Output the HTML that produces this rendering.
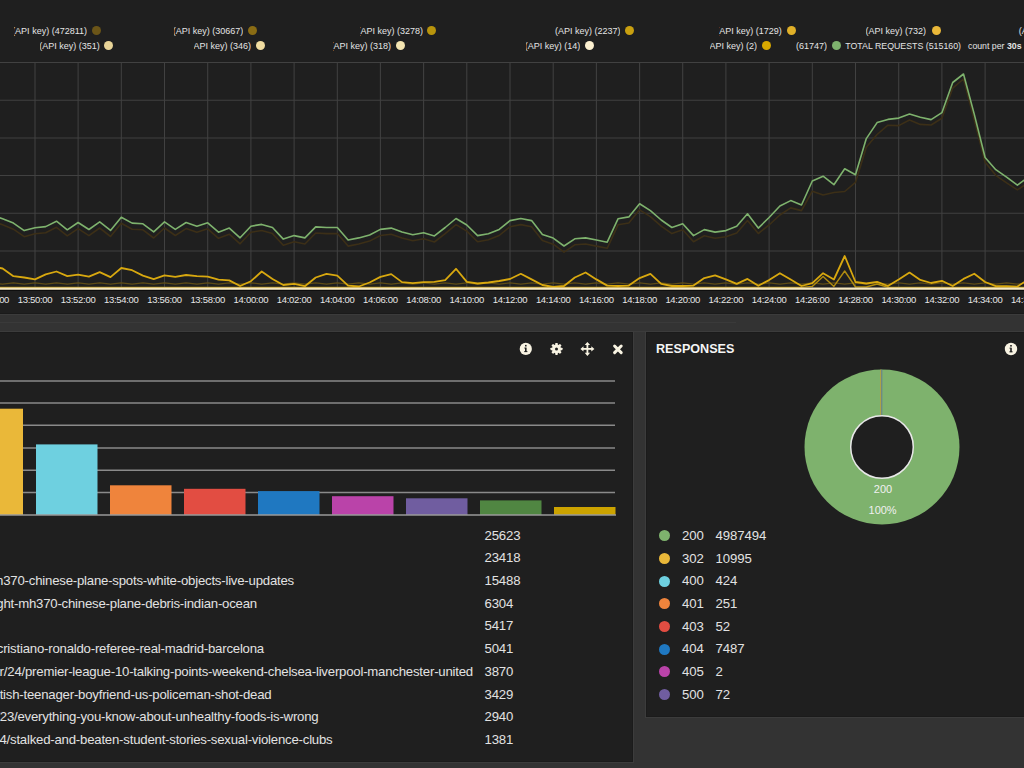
<!DOCTYPE html>
<html><head><meta charset="utf-8"><title>Dashboard</title>
<style>
html,body{margin:0;padding:0;width:1024px;height:768px;overflow:hidden;background:#333333;font-family:"Liberation Sans",sans-serif;}
.p{position:absolute;background:#1f1f1f}
.chart{position:absolute;left:0;top:0}
.lg{position:absolute;height:12px;overflow:hidden;font-size:9px;line-height:12px;color:#e4e4e4}
.lg span{position:absolute;right:0;top:0;white-space:nowrap}
.lt{position:absolute;font-size:9px;line-height:12px;color:#e4e4e4;white-space:nowrap}
.dot{position:absolute;width:9px;height:9px;border-radius:50%}
.rdot{position:absolute;width:11px;height:11px;border-radius:50%}
.tr{position:absolute;font-size:13.2px;letter-spacing:-0.21px;line-height:16px;color:#e2e2e2;white-space:nowrap}
.tn{position:absolute;font-size:13.2px;letter-spacing:-0.15px;line-height:16px;color:#e2e2e2;white-space:nowrap}
.h{position:absolute;font-size:12.6px;font-weight:bold;color:#f4f4f4;white-space:nowrap;line-height:16px}
.pb{position:absolute;box-sizing:border-box;border:1px solid #3c3c3c;box-shadow:inset 0 0 0 1px #1b1b1b;background:#1f1f1f}
.hl{position:absolute;left:0;width:1024px;height:1px}
</style></head><body>
<div class="p" style="left:0;top:0;width:1024px;height:313px"></div>
<div class="hl" style="top:313px;background:#1a1a1a"></div>
<div class="hl" style="top:314px;background:#3b3b3b"></div>
<div class="hl" style="top:322px;width:736px;background:#3a3a3a"></div>
<div class="hl" style="top:331px;background:#3b3b3b"></div>
<svg class="chart" width="1024" height="313" viewBox="0 0 1024 313">
<g stroke="#414141" stroke-width="1.05"><line x1="-8.2" y1="62" x2="-8.2" y2="288" /><line x1="35.0" y1="62" x2="35.0" y2="288" /><line x1="78.1" y1="62" x2="78.1" y2="288" /><line x1="121.3" y1="62" x2="121.3" y2="288" /><line x1="164.5" y1="62" x2="164.5" y2="288" /><line x1="207.7" y1="62" x2="207.7" y2="288" /><line x1="250.9" y1="62" x2="250.9" y2="288" /><line x1="294.1" y1="62" x2="294.1" y2="288" /><line x1="337.3" y1="62" x2="337.3" y2="288" /><line x1="380.4" y1="62" x2="380.4" y2="288" /><line x1="423.6" y1="62" x2="423.6" y2="288" /><line x1="466.8" y1="62" x2="466.8" y2="288" /><line x1="510.0" y1="62" x2="510.0" y2="288" /><line x1="553.2" y1="62" x2="553.2" y2="288" /><line x1="596.4" y1="62" x2="596.4" y2="288" /><line x1="639.6" y1="62" x2="639.6" y2="288" /><line x1="682.7" y1="62" x2="682.7" y2="288" /><line x1="725.9" y1="62" x2="725.9" y2="288" /><line x1="769.1" y1="62" x2="769.1" y2="288" /><line x1="812.3" y1="62" x2="812.3" y2="288" /><line x1="855.5" y1="62" x2="855.5" y2="288" /><line x1="898.7" y1="62" x2="898.7" y2="288" /><line x1="941.9" y1="62" x2="941.9" y2="288" /><line x1="985.1" y1="62" x2="985.1" y2="288" /><line x1="1028.2" y1="62" x2="1028.2" y2="288" /><line x1="0" y1="62.5" x2="1024" y2="62.5" /><line x1="0" y1="100.2" x2="1024" y2="100.2" /><line x1="0" y1="137.9" x2="1024" y2="137.9" /><line x1="0" y1="175.5" x2="1024" y2="175.5" /><line x1="0" y1="213.2" x2="1024" y2="213.2" /><line x1="0" y1="250.9" x2="1024" y2="250.9" /></g>
<path d="M-8.2,282.8 L2.6,284.2 L13.4,282.8 L24.2,284.2 L35.0,282.8 L45.7,284.2 L56.5,282.8 L67.3,284.2 L78.1,282.8 L88.9,284.2 L99.7,282.8 L110.5,284.2 L121.3,282.8 L132.1,284.2 L142.9,282.8 L153.7,284.2 L164.5,282.8 L175.3,284.2 L186.1,282.8 L196.9,284.2 L207.7,282.8 L218.5,284.2 L229.3,282.8 L240.1,284.2 L250.9,282.8 L261.7,284.2 L272.5,282.8 L283.3,284.2 L294.1,282.8 L304.9,284.2 L315.7,282.8 L326.5,284.2 L337.3,282.8 L348.1,284.2 L358.8,282.8 L369.6,284.2 L380.4,282.8 L391.2,284.2 L402.0,282.8 L412.8,284.2 L423.6,282.8 L434.4,284.2 L445.2,282.8 L456.0,284.2 L466.8,282.8 L477.6,284.2 L488.4,282.8 L499.2,284.2 L510.0,282.8 L520.8,284.2 L531.6,282.8 L542.4,284.2 L553.2,282.8 L564.0,284.2 L574.8,282.8 L585.6,284.2 L596.4,282.8 L607.2,284.2 L618.0,282.8 L628.8,284.2 L639.6,282.8 L650.4,284.2 L661.2,282.8 L671.9,284.2 L682.7,282.8 L693.5,284.2 L704.3,282.8 L715.1,284.2 L725.9,282.8 L736.7,284.2 L747.5,282.8 L758.3,284.2 L769.1,282.8 L779.9,284.2 L790.7,282.8 L801.5,284.2 L812.3,282.8 L823.1,284.2 L833.9,282.8 L844.7,284.2 L855.5,282.8 L866.3,284.2 L877.1,282.8 L887.9,284.2 L898.7,282.8 L909.5,284.2 L920.3,282.8 L931.1,284.2 L941.9,282.8 L952.7,284.2 L963.5,282.8 L974.3,284.2 L985.1,282.8 L995.8,284.2 L1006.6,282.8 L1017.4,284.2 L1028.2,282.8" fill="none" stroke="#5e4c16" stroke-width="1.3" stroke-linejoin="round"/>
<path d="M-8.2,287.4 L2.6,287.4 L13.4,287.4 L24.2,287.4 L35.0,287.4 L45.7,287.4 L56.5,287.4 L67.3,287.4 L78.1,287.4 L88.9,287.4 L99.7,287.4 L110.5,287.4 L121.3,287.4 L132.1,287.4 L142.9,287.4 L153.7,287.4 L164.5,287.4 L175.3,287.4 L186.1,287.4 L196.9,287.4 L207.7,287.4 L218.5,287.4 L229.3,287.4 L240.1,287.4 L250.9,287.4 L261.7,287.4 L272.5,287.4 L283.3,287.4 L294.1,287.4 L304.9,287.4 L315.7,287.4 L326.5,287.4 L337.3,287.4 L348.1,287.4 L358.8,287.4 L369.6,287.4 L380.4,287.4 L391.2,287.4 L402.0,287.4 L412.8,287.4 L423.6,287.4 L434.4,287.4 L445.2,287.4 L456.0,287.4 L466.8,287.4 L477.6,287.4 L488.4,287.4 L499.2,287.4 L510.0,287.4 L520.8,287.4 L531.6,287.4 L542.4,287.4 L553.2,287.4 L564.0,287.4 L574.8,287.4 L585.6,287.4 L596.4,287.4 L607.2,287.4 L618.0,287.4 L628.8,287.4 L639.6,287.4 L650.4,287.4 L661.2,287.4 L671.9,287.4 L682.7,287.4 L693.5,287.4 L704.3,287.4 L715.1,287.4 L725.9,287.4 L736.7,287.4 L747.5,287.4 L758.3,287.4 L769.1,287.4 L779.9,287.4 L790.7,287.4 L801.5,287.4 L812.3,286.4 L823.1,276.4 L833.9,286.4 L844.7,271.0 L855.5,287.0 L866.3,287.0 L877.1,284.0 L887.9,287.4 L898.7,287.4 L909.5,287.4 L920.3,287.4 L931.1,287.4 L941.9,287.4 L952.7,287.4 L963.5,287.4 L974.3,287.4 L985.1,287.4 L995.8,287.4 L1006.6,287.4 L1017.4,287.4 L1028.2,287.4" fill="none" stroke="#b08c10" stroke-width="1.4" stroke-linejoin="round"/>
<path d="M-8.2,220.6 L2.6,224.8 L13.4,229.2 L24.2,236.7 L35.0,233.8 L45.7,232.7 L56.5,227.3 L67.3,235.8 L78.1,228.6 L88.9,235.6 L99.7,228.0 L110.5,236.5 L121.3,223.3 L132.1,229.2 L142.9,229.8 L153.7,238.0 L164.5,228.0 L175.3,235.5 L186.1,228.6 L196.9,232.3 L207.7,228.8 L218.5,238.3 L229.3,234.2 L240.1,243.8 L250.9,232.3 L261.7,230.5 L272.5,233.6 L283.3,245.2 L294.1,241.7 L304.9,244.0 L315.7,233.0 L326.5,233.6 L337.3,233.6 L348.1,246.1 L358.8,244.0 L369.6,241.1 L380.4,235.5 L391.2,234.2 L402.0,238.0 L412.8,240.8 L423.6,238.8 L434.4,242.0 L445.2,233.6 L456.0,224.6 L466.8,231.1 L477.6,241.7 L488.4,239.8 L499.2,235.5 L510.0,226.7 L520.8,224.6 L531.6,226.7 L542.4,240.5 L553.2,244.2 L564.0,252.1 L574.8,244.8 L585.6,244.0 L596.4,246.1 L607.2,248.3 L618.0,224.8 L628.8,223.0 L639.6,209.8 L650.4,216.7 L661.2,226.1 L671.9,233.6 L682.7,229.8 L693.5,241.7 L704.3,235.7 L715.1,238.2 L725.9,236.7 L736.7,233.1 L747.5,220.6 L758.3,233.5 L769.1,225.0 L779.9,215.0 L790.7,207.9 L801.5,210.6 L812.3,191.2 L823.1,195.0 L833.9,192.5 L844.7,191.5 L855.5,182.3 L866.3,147.2 L877.1,134.5 L887.9,125.2 L898.7,125.6 L909.5,120.0 L920.3,124.4 L931.1,125.0 L941.9,118.3 L952.7,88.1 L963.5,79.0 L974.3,120.0 L985.1,162.2 L995.8,175.3 L1006.6,182.8 L1017.4,189.8 L1028.2,182.8" fill="none" stroke="#3c2f17" stroke-width="1.6" stroke-linejoin="round"/>
<path d="M-8.2,266.5 L2.6,268.5 L13.4,276.2 L24.2,277.5 L35.0,279.4 L45.7,274.4 L56.5,271.5 L67.3,276.2 L78.1,274.6 L88.9,276.6 L99.7,272.1 L110.5,277.1 L121.3,268.0 L132.1,270.2 L142.9,275.6 L153.7,279.1 L164.5,275.4 L175.3,276.9 L186.1,275.0 L196.9,276.2 L207.7,276.6 L218.5,279.6 L229.3,280.4 L240.1,286.0 L250.9,281.2 L261.7,271.5 L272.5,279.0 L283.3,285.0 L294.1,283.8 L304.9,286.2 L315.7,277.5 L326.5,273.8 L337.3,275.6 L348.1,285.6 L358.8,286.5 L369.6,282.5 L380.4,276.9 L391.2,274.1 L402.0,282.1 L412.8,283.1 L423.6,282.1 L434.4,281.9 L445.2,280.2 L456.0,268.8 L466.8,281.9 L477.6,283.5 L488.4,282.5 L499.2,281.0 L510.0,279.0 L520.8,273.8 L531.6,279.4 L542.4,285.0 L553.2,287.0 L564.0,286.0 L574.8,277.5 L585.6,272.5 L596.4,279.4 L607.2,285.6 L618.0,286.0 L628.8,285.6 L639.6,278.1 L650.4,273.8 L661.2,283.8 L671.9,286.0 L682.7,286.0 L693.5,285.6 L704.3,278.1 L715.1,275.4 L725.9,279.4 L736.7,283.9 L747.5,278.9 L758.3,285.8 L769.1,280.1 L779.9,273.2 L790.7,279.5 L801.5,286.0 L812.3,283.2 L823.1,273.2 L833.9,279.5 L844.7,256.0 L855.5,282.0 L866.3,283.5 L877.1,281.8 L887.9,286.0 L898.7,279.5 L909.5,272.6 L920.3,279.9 L931.1,283.0 L941.9,280.8 L952.7,286.0 L963.5,278.9 L974.3,273.7 L985.1,282.0 L995.8,286.2 L1006.6,286.2 L1017.4,286.6 L1028.2,279.5" fill="none" stroke="#d8a80f" stroke-width="1.8" stroke-linejoin="round"/>
<path d="M-8.2,214.5 L2.6,218.8 L13.4,223.1 L24.2,230.6 L35.0,227.8 L45.7,226.6 L56.5,221.2 L67.3,229.8 L78.1,222.5 L88.9,229.5 L99.7,221.9 L110.5,230.4 L121.3,217.2 L132.1,223.1 L142.9,223.8 L153.7,231.9 L164.5,221.9 L175.3,229.4 L186.1,222.5 L196.9,226.2 L207.7,222.8 L218.5,232.2 L229.3,228.1 L240.1,237.8 L250.9,226.2 L261.7,224.4 L272.5,227.5 L283.3,239.1 L294.1,235.6 L304.9,237.9 L315.7,226.9 L326.5,227.5 L337.3,227.5 L348.1,240.0 L358.8,237.9 L369.6,235.0 L380.4,229.4 L391.2,228.1 L402.0,231.9 L412.8,234.8 L423.6,232.8 L434.4,235.9 L445.2,227.5 L456.0,218.5 L466.8,225.0 L477.6,235.6 L488.4,233.8 L499.2,229.4 L510.0,220.6 L520.8,218.5 L531.6,220.6 L542.4,234.4 L553.2,238.1 L564.0,246.0 L574.8,238.8 L585.6,237.9 L596.4,240.0 L607.2,242.2 L618.0,218.8 L628.8,216.9 L639.6,203.8 L650.4,210.6 L661.2,220.0 L671.9,227.5 L682.7,223.8 L693.5,235.6 L704.3,229.6 L715.1,232.1 L725.9,230.6 L736.7,226.2 L747.5,213.8 L758.3,228.1 L769.1,217.5 L779.9,206.0 L790.7,200.6 L801.5,205.0 L812.3,181.0 L823.1,176.2 L833.9,184.7 L844.7,168.8 L855.5,174.8 L866.3,138.6 L877.1,122.6 L887.9,119.4 L898.7,118.1 L909.5,114.1 L920.3,117.2 L931.1,119.6 L941.9,112.7 L952.7,82.5 L963.5,74.0 L974.3,114.4 L985.1,157.5 L995.8,169.7 L1006.6,177.2 L1017.4,185.2 L1028.2,177.0" fill="none" stroke="#7eb26d" stroke-width="1.6" stroke-linejoin="round"/>
<line x1="0" y1="288.6" x2="1024" y2="288.6" stroke="#f6e8c2" stroke-width="2.2"/>
<line x1="0" y1="290.5" x2="1024" y2="290.5" stroke="#0e0e0e" stroke-width="1"/>
<g fill="#e6e6e6" font-size="9.5" letter-spacing="-0.3" text-anchor="middle" font-family="Liberation Sans, sans-serif"><text x="-8.2" y="303">13:48:00</text><text x="35.0" y="303">13:50:00</text><text x="78.1" y="303">13:52:00</text><text x="121.3" y="303">13:54:00</text><text x="164.5" y="303">13:56:00</text><text x="207.7" y="303">13:58:00</text><text x="250.9" y="303">14:00:00</text><text x="294.1" y="303">14:02:00</text><text x="337.3" y="303">14:04:00</text><text x="380.4" y="303">14:06:00</text><text x="423.6" y="303">14:08:00</text><text x="466.8" y="303">14:10:00</text><text x="510.0" y="303">14:12:00</text><text x="553.2" y="303">14:14:00</text><text x="596.4" y="303">14:16:00</text><text x="639.6" y="303">14:18:00</text><text x="682.7" y="303">14:20:00</text><text x="725.9" y="303">14:22:00</text><text x="769.1" y="303">14:24:00</text><text x="812.3" y="303">14:26:00</text><text x="855.5" y="303">14:28:00</text><text x="898.7" y="303">14:30:00</text><text x="941.9" y="303">14:32:00</text><text x="985.1" y="303">14:34:00</text><text x="1028.2" y="303">14:36:00</text></g>
</svg>
<div class="lg" style="left:14.0px;top:25px;width:73.0px"><span>host:xxxxx (API key) (472811)</span></div><i class="dot" style="left:91.6px;top:25.8px;background:#6b5518"></i><div class="lg" style="left:173.5px;top:25px;width:69.7px"><span>host:xxxxx (API key) (30667)</span></div><i class="dot" style="left:248.1px;top:25.8px;background:#8a6c14"></i><div class="lg" style="left:360.0px;top:25px;width:63.0px"><span>host:xxxxx (API key) (3278)</span></div><i class="dot" style="left:427.4px;top:25.8px;background:#b8940c"></i><div class="lg" style="left:555.3px;top:25px;width:65.2px"><span>host:xxxxx (API key) (2237)</span></div><i class="dot" style="left:624.8px;top:25.8px;background:#c9a010"></i><div class="lg" style="left:719.0px;top:25px;width:62.7px"><span>host:xxxxx (API key) (1729)</span></div><i class="dot" style="left:786.5px;top:25.8px;background:#e0b028"></i><div class="lg" style="left:866.3px;top:25px;width:59.7px"><span>host:xxxxx (API key) (732)</span></div><i class="dot" style="left:931.6px;top:25.8px;background:#eab839"></i><div class="lg" style="left:40.2px;top:40px;width:59.5px"><span>host:xxxxx (API key) (351)</span></div><i class="dot" style="left:104.0px;top:41.3px;background:#e8d498"></i><div class="lg" style="left:194.0px;top:40px;width:57.0px"><span>host:xxxxx (API key) (346)</span></div><i class="dot" style="left:256.0px;top:41.3px;background:#f0dca0"></i><div class="lg" style="left:333.4px;top:40px;width:57.6px"><span>host:xxxxx (API key) (318)</span></div><i class="dot" style="left:395.8px;top:41.3px;background:#f4e4b0"></i><div class="lg" style="left:526.0px;top:40px;width:54.3px"><span>host:xxxxx (API key) (14)</span></div><i class="dot" style="left:585.2px;top:41.3px;background:#fcf0d0"></i><div class="lg" style="left:709.8px;top:40px;width:47.2px"><span>host:xxxxx (API key) (2)</span></div><i class="dot" style="left:761.9px;top:41.3px;background:#d8a800"></i><div class="lg" style="left:796.0px;top:40px;width:31.0px"><span>host:xxxxx (61747)</span></div><i class="dot" style="left:832.0px;top:41.3px;background:#7eb26d"></i><div class="lt" style="left:845.3px;top:40px;font-size:8.8px">TOTAL REQUESTS (515160)</div><div class="lt" style="left:968px;top:40px;font-size:8.75px">count per <b>30s</b></div><div class="lt" style="left:1018.8px;top:25px">(API key)</div>
<div class="pb" style="left:-10px;top:331px;width:644px;height:432px"></div>
<div class="pb" style="left:645px;top:331px;width:389px;height:387px"></div>
<svg width="130" height="24" viewBox="0 0 130 24" style="position:absolute;left:510px;top:337px">
<circle cx="15.8" cy="11.9" r="6.1" fill="#f8f3e2"/>
<rect x="15.0" y="10.6" width="1.6" height="4.3" fill="#1f1f1f"/><rect x="14.2" y="14.1" width="3.2" height="1" fill="#1f1f1f"/>
<rect x="15.0" y="7.9" width="1.6" height="1.6" fill="#1f1f1f"/><rect x="14.3" y="10.6" width="1.2" height="0.9" fill="#1f1f1f"/>
<g transform="translate(46.5,11.9)" fill="#f8f3e2">
<circle r="4.5"/>
<rect x="-1.25" y="-6" width="2.5" height="12" rx="0.6"/>
<rect x="-1.25" y="-6" width="2.5" height="12" rx="0.6" transform="rotate(45)"/>
<rect x="-1.25" y="-6" width="2.5" height="12" rx="0.6" transform="rotate(90)"/>
<rect x="-1.25" y="-6" width="2.5" height="12" rx="0.6" transform="rotate(135)"/>
<circle r="1.5" fill="#1f1f1f"/>
</g>
<g transform="translate(77.4,11.9)" fill="#f8f3e2">
<rect x="-0.9" y="-5" width="1.8" height="10"/><rect x="-5" y="-0.9" width="10" height="1.8"/>
<path d="M0,-7 L-2.7,-3.9 L2.7,-3.9Z M0,7 L-2.7,3.9 L2.7,3.9Z M-7,0 L-3.9,-2.7 L-3.9,2.7Z M7,0 L3.9,-2.7 L3.9,2.7Z"/>
</g>
<g transform="translate(107.9,12.3)" stroke="#f8f3e2" stroke-width="3" stroke-linecap="round">
<line x1="-3.3" y1="-3.3" x2="3.3" y2="3.3"/><line x1="-3.3" y1="3.3" x2="3.3" y2="-3.3"/>
</g>
</svg>
<svg width="20" height="20" viewBox="0 0 20 20" style="position:absolute;left:1000.6px;top:338.75px">
<circle cx="10" cy="10" r="6.2" fill="#f8f3e2"/>
<rect x="9.2" y="8.7" width="1.6" height="4.4" fill="#1f1f1f"/><rect x="8.4" y="12.3" width="3.2" height="1" fill="#1f1f1f"/>
<rect x="9.2" y="6" width="1.6" height="1.6" fill="#1f1f1f"/><rect x="8.5" y="8.7" width="1.2" height="0.9" fill="#1f1f1f"/>
</svg>
<svg class="bars" width="633" height="150" viewBox="0 370 633 150" style="position:absolute;left:0;top:370px"><line x1="0" y1="381" x2="615" y2="381" stroke="#8a8a8a" stroke-width="1.4"/><line x1="0" y1="403" x2="615" y2="403" stroke="#8a8a8a" stroke-width="1.4"/><line x1="0" y1="425.3" x2="615" y2="425.3" stroke="#8a8a8a" stroke-width="1.4"/><line x1="0" y1="448" x2="615" y2="448" stroke="#8a8a8a" stroke-width="1.4"/><line x1="0" y1="470.2" x2="615" y2="470.2" stroke="#8a8a8a" stroke-width="1.4"/><line x1="0" y1="492.5" x2="615" y2="492.5" stroke="#8a8a8a" stroke-width="1.4"/><rect x="-38.5" y="408.7" width="61.5" height="106.30000000000001" fill="#eab839"/><rect x="36" y="444.4" width="61.5" height="70.60000000000002" fill="#6ed0e0"/><rect x="110" y="485.3" width="61.5" height="29.69999999999999" fill="#ef843c"/><rect x="184" y="488.8" width="61.5" height="26.19999999999999" fill="#e24d42"/><rect x="258" y="491.1" width="61.5" height="23.899999999999977" fill="#1f78c1"/><rect x="332" y="496.2" width="61.5" height="18.80000000000001" fill="#ba43a9"/><rect x="406" y="498.3" width="61.5" height="16.69999999999999" fill="#705da0"/><rect x="480" y="500.4" width="61.5" height="14.600000000000023" fill="#508642"/><rect x="554" y="507" width="61.5" height="8" fill="#cca300"/><line x1="0" y1="515" x2="616" y2="515" stroke="#9a9a9a" stroke-width="1.4"/></svg>
<div class="tn" style="left:484.5px;top:527.7px">25623</div><div class="tn" style="left:484.5px;top:550.4px">23418</div><div class="tr" style="right:730.0px;top:573.1px">world/2014/mar/20/malaysia-airlines-flight-mh370-chinese-plane-spots-white-objects-live-updates</div><div class="tn" style="left:484.5px;top:573.1px">15488</div><div class="tr" style="right:767.0px;top:595.7px">world/2014/mar/24/malaysia-airlines-flight-mh370-chinese-plane-debris-indian-ocean</div><div class="tn" style="left:484.5px;top:595.7px">6304</div><div class="tn" style="left:484.5px;top:618.4px">5417</div><div class="tr" style="right:760.0px;top:641.1px">football/2014/mar/23/cristiano-ronaldo-referee-real-madrid-barcelona</div><div class="tn" style="left:484.5px;top:641.1px">5041</div><div class="tr" style="right:551.0px;top:663.8px">football/blog/2014/mar/24/premier-league-10-talking-points-weekend-chelsea-liverpool-manchester-united</div><div class="tn" style="left:484.5px;top:663.8px">3870</div><div class="tr" style="right:752.5px;top:686.5px">world/2014/mar/24/british-teenager-boyfriend-us-policeman-shot-dead</div><div class="tn" style="left:484.5px;top:686.5px">3429</div><div class="tr" style="right:705.5px;top:709.1px">lifeandstyle/2014/mar/23/everything-you-know-about-unhealthy-foods-is-wrong</div><div class="tn" style="left:484.5px;top:709.1px">2940</div><div class="tr" style="right:691.5px;top:731.8px">education/2014/mar/24/stalked-and-beaten-student-stories-sexual-violence-clubs</div><div class="tn" style="left:484.5px;top:731.8px">1381</div>
<div class="h" style="left:656px;top:341.4px">RESPONSES</div>
<svg width="180" height="180" viewBox="0 0 180 180" style="position:absolute;left:791.9px;top:357.4px">
<circle cx="90" cy="90" r="77.5" fill="#7eb26d"/>
<line x1="88.8" y1="12.5" x2="88.8" y2="59" stroke="#c89a30" stroke-width="0.9"/><line x1="89.8" y1="12.5" x2="89.8" y2="58" stroke="#5a7898" stroke-width="0.9"/>
<circle cx="90" cy="90" r="31.3" fill="#1f1f1f" stroke="#e8e8e8" stroke-width="1.5"/>
<text x="91" y="135.5" text-anchor="middle" font-size="11" fill="#f0f0f0" font-family="Liberation Sans, sans-serif">200</text>
<text x="90.6" y="156.6" text-anchor="middle" font-size="11" fill="#f0f0f0" font-family="Liberation Sans, sans-serif">100%</text>
</svg>
<i class="rdot" style="left:658.9px;top:530.2px;background:#7eb26d"></i><div class="tn" style="left:682px;top:527.9px;font-size:13.2px;letter-spacing:-0.1px">200</div><div class="tn" style="left:715.5px;top:527.9px;font-size:13.2px;letter-spacing:-0.1px">4987494</div><i class="rdot" style="left:658.9px;top:552.9px;background:#eab839"></i><div class="tn" style="left:682px;top:550.5px;font-size:13.2px;letter-spacing:-0.1px">302</div><div class="tn" style="left:715.5px;top:550.5px;font-size:13.2px;letter-spacing:-0.1px">10995</div><i class="rdot" style="left:658.9px;top:575.6px;background:#6ed0e0"></i><div class="tn" style="left:682px;top:573.2px;font-size:13.2px;letter-spacing:-0.1px">400</div><div class="tn" style="left:715.5px;top:573.2px;font-size:13.2px;letter-spacing:-0.1px">424</div><i class="rdot" style="left:658.9px;top:598.2px;background:#ef843c"></i><div class="tn" style="left:682px;top:595.8px;font-size:13.2px;letter-spacing:-0.1px">401</div><div class="tn" style="left:715.5px;top:595.8px;font-size:13.2px;letter-spacing:-0.1px">251</div><i class="rdot" style="left:658.9px;top:620.9px;background:#e24d42"></i><div class="tn" style="left:682px;top:618.5px;font-size:13.2px;letter-spacing:-0.1px">403</div><div class="tn" style="left:715.5px;top:618.5px;font-size:13.2px;letter-spacing:-0.1px">52</div><i class="rdot" style="left:658.9px;top:643.5px;background:#1f78c1"></i><div class="tn" style="left:682px;top:641.1px;font-size:13.2px;letter-spacing:-0.1px">404</div><div class="tn" style="left:715.5px;top:641.1px;font-size:13.2px;letter-spacing:-0.1px">7487</div><i class="rdot" style="left:658.9px;top:666.2px;background:#ba43a9"></i><div class="tn" style="left:682px;top:663.8px;font-size:13.2px;letter-spacing:-0.1px">405</div><div class="tn" style="left:715.5px;top:663.8px;font-size:13.2px;letter-spacing:-0.1px">2</div><i class="rdot" style="left:658.9px;top:688.9px;background:#705da0"></i><div class="tn" style="left:682px;top:686.5px;font-size:13.2px;letter-spacing:-0.1px">500</div><div class="tn" style="left:715.5px;top:686.5px;font-size:13.2px;letter-spacing:-0.1px">72</div>
</body></html>
